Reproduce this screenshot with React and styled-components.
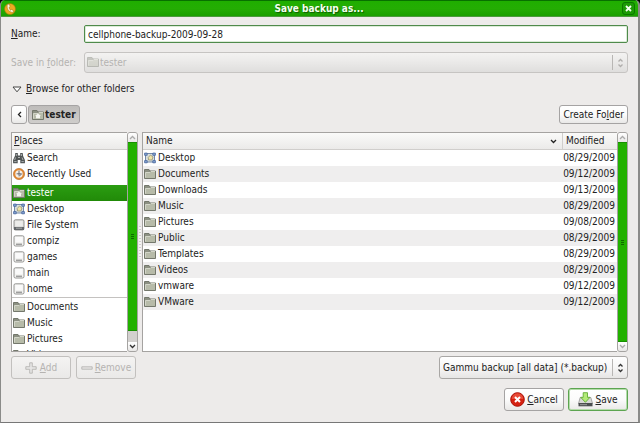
import React from "react";
import styled, { createGlobalStyle, css } from "styled-components";

const Global = createGlobalStyle`
  *, *::before, *::after { box-sizing: border-box; }
  body { margin: 0; background: #000; }
  body, button, input, select, table {
    font-family: "DejaVu Sans Condensed", "DejaVu Sans", sans-serif;
    font-size: 10px;
    line-height: 16px;
    color: #222;
  }
  u { text-underline-offset: 1px; }
`;

const Window = styled.div`
  display: flex;
  flex-direction: column;
  height: 100vh;
  min-height: 320px;
  background: #edebea;
  border: 1px solid #8b8b89;
  border-top: 0;
  border-right-width: 2px;
  border-bottom-color: #777;
  border-radius: 5px 5px 0 0;
  overflow: hidden;
`;

const TitleBar = styled.header`
  display: flex;
  align-items: center;
  flex: none;
  height: 17px;
  padding: 0 3px;
  background: linear-gradient(#1fae00, #24ad03 50%, #1a9f00);
  border-top: 1px solid #087000;
  border-bottom: 1px solid #4c9a3e;
`;

const Title = styled.h1`
  flex: 1;
  margin: 0;
  text-align: center;
  font-size: 10px;
  line-height: 15px;
  font-weight: bold;
  color: #f4fff0;
  text-shadow: 1px 1px 1px #0c5c00;
`;

const CloseButton = styled.button`
  display: grid;
  place-items: center;
  width: 13px;
  height: 13px;
  padding: 0;
  border: 1px solid #0b7600;
  border-radius: 3px;
  background: #1c9b05;
`;

const Body = styled.main`
  flex: 1;
  min-height: 0;
  display: flex;
  flex-direction: column;
  padding: 8px 10px 11px;
`;

const Fields = styled.div`
  display: grid;
  grid-template-columns: 65px 1fr;
  column-gap: 8px;
  row-gap: 9px;
  align-items: center;
`;

const Label = styled.label`
  white-space: nowrap;
  color: ${(p) => (p.$off ? "#b5b3b1" : "#222")};
`;

const NameInput = styled.input`
  width: 100%;
  height: 18px;
  padding: 0 3px;
  border: 1px solid #4f8a4b;
  border-radius: 2px;
  outline: none;
  background: #fff;
  box-shadow: inset 0 0 0 1px #dcecd8;
`;

const Combo = styled.div`
  position: relative;
  ${(p) => p.$end && css`margin-left: auto;`}
`;

const Select = styled.select`
  display: block;
  appearance: none;
  width: 100%;
  height: ${(p) => (p.$tall ? 23 : 21)}px;
  padding: 0 19px 0 ${(p) => (p.$icon ? 15 : 3)}px;
  border: 1px solid #a9a7a5;
  border-radius: 3px;
  background: linear-gradient(#fff, #f7f6f6 50%, #e6e5e4);
  opacity: 1;
  &:disabled {
    color: #b5b3b1;
    border-color: #c6c4c2;
    background: linear-gradient(#f3f2f1, #ecebea 40%, #dfdedd);
  }
`;

const ComboIcon = styled.span`
  position: absolute;
  left: 3px;
  top: 4px;
  height: 12px;
  opacity: 0.4;
  pointer-events: none;
`;

const ComboArrows = styled.span`
  position: absolute;
  right: 0;
  top: 3px;
  bottom: 3px;
  width: 16px;
  display: grid;
  place-items: center;
  border-left: 1px solid #b8b6b4;
  color: ${(p) => (p.$off ? "#b0aeac" : "#333")};
  pointer-events: none;
`;

const Expander = styled.button`
  display: flex;
  align-items: center;
  align-self: flex-start;
  gap: 4px;
  margin-top: 8px;
  padding: 0 1px;
  border: 0;
  background: none;
`;

const PathRow = styled.nav`
  display: flex;
  align-items: center;
  gap: 1px;
  margin: 8px 0;
`;

const Button = styled.button`
  display: inline-flex;
  align-items: center;
  justify-content: center;
  gap: ${(p) => p.$gap ?? 0}px;
  height: ${(p) => (p.$tall ? 23 : 19)}px;
  min-width: ${(p) => (p.$wide ? 60 : 16)}px;
  padding: 0 3px;
  white-space: nowrap;
  border: 1px solid #a5a3a3;
  border-radius: 3px;
  background: linear-gradient(#fff, #fbfbfb 50%, #e9e8e7);
  ${(p) => p.$pressed && css`
    font-weight: bold;
    background: linear-gradient(#bebcba, #cfcdcb);
  `}
  ${(p) => p.$primary && css`
    border-color: #5da551;
    box-shadow: inset 0 0 0 1px #b4dcaa;
  `}
  &:disabled {
    color: #b5b3b1;
    border-color: #c2c0be;
    background: linear-gradient(#f4f3f2, #eae9e8);
  }
`;

const Spacer = styled.span`
  flex: 1;
`;

const Browser = styled.div`
  flex: 1;
  min-height: 0;
  display: grid;
  grid-template-columns: 127px 4px 1fr;
  grid-template-rows: minmax(0, 1fr);
`;

const Pane = styled.section`
  display: flex;
  min-width: 0;
  min-height: 0;
`;

const PaneView = styled.div`
  flex: 1;
  min-width: 0;
  overflow-x: hidden;
  overflow-y: auto;
  scrollbar-width: none;
  background: #fff;
  border: 1px solid #a5a3a1;
  border-right: 0;
`;

const headerLook = css`
  height: 17px;
  padding: 0 2px;
  text-align: left;
  font-weight: normal;
  line-height: 16px;
  background: linear-gradient(#fafaf9, #ebeae9);
  border-bottom: 1px solid #d0cecc;
`;

const PlacesHeader = styled.h2`
  ${headerLook}
  margin: 0;
  font-size: 10px;
`;

const PlacesList = styled.ul`
  margin: 0;
  padding: 0;
  list-style: none;
`;

const Divider = styled.li`
  height: ${(p) => (p.$line ? 2 : 3)}px;
  border-top: ${(p) => (p.$line ? "1px solid #c4c2c0" : "0")};
`;

const Place = styled.button`
  display: flex;
  align-items: center;
  gap: 2px;
  width: 100%;
  height: 16px;
  padding: 0 1px;
  border: 0;
  white-space: nowrap;
  text-align: left;
  color: ${(p) => (p.$selected ? "#fff" : "#222")};
  background: ${(p) => (p.$selected ? "linear-gradient(#2b9d12, #218a08)" : "none")};
`;

const Scroll = styled.div`
  display: flex;
  flex-direction: column;
  flex: none;
  width: 11px;
  border: 1px solid #a5a3a1;
  border-radius: 3px;
  background: #d2d0ce;
  overflow: hidden;
`;

const ScrollButton = styled.button`
  flex: none;
  display: grid;
  place-items: center;
  height: 9px;
  padding: 0;
  border: 0;
  color: ${(p) => (p.$off ? "#aaa" : "#333")};
  background: linear-gradient(#fff, #e8e7e6);
`;

const Thumb = styled.div`
  flex: ${(p) => p.$share};
  display: grid;
  place-items: center;
  margin: 0 -1px;
  background: #22b100;
  border: 1px solid #179000;
  color: #0d6a00;
`;

const Trough = styled.div`
  flex: ${(p) => p.$share};
`;

const Grip = styled.div`
  align-self: center;
  justify-self: center;
  width: 2px;
  height: 32px;
  background: repeating-linear-gradient(#d0cecc 0 1px, #f6f5f4 1px 3px);
`;

const FileTable = styled.table`
  width: 100%;
  border-collapse: separate;
  border-spacing: 0;
`;

const Th = styled.th`
  ${headerLook}
  padding-left: 3px;
  ${(p) => p.$narrow && css`
    width: 55px;
    border-left: 1px solid #d0cecc;
  `}
`;

const HeadCell = styled.div`
  display: flex;
  align-items: center;
  justify-content: space-between;
  padding-right: 3px;
`;

const FileRow = styled.tr`
  &:nth-child(even) { background: #efeeee; }
`;

const Td = styled.td`
  height: 16px;
  padding: 0 2px 0 1px;
  white-space: nowrap;
  text-align: ${(p) => (p.$right ? "right" : "left")};
`;

const FileName = styled.span`
  display: flex;
  align-items: center;
  gap: 2px;
`;

const Actions = styled.div`
  display: flex;
  align-items: center;
  gap: 5px;
  margin-top: 4px;
`;

const DialogActions = styled.footer`
  display: flex;
  justify-content: flex-end;
  gap: 4px;
  margin-top: 9px;
`;

const Svg = styled.svg`
  display: block;
  flex: none;
`;

const Folder = ({ home }) => (
  <Svg width="12" height="12" viewBox="0 0 12 12">
    <path d="M.5 10.5V1.5h4.5l1 1.5h5.5v7.5z" fill="#8c9082" stroke="#74786c" />
    <path d="M1 10V4.5H6L7 3.5h4V10z" fill="#b7bba9" />
    <path d="M1.5 9.5V4.5H6L7 3.5h4" fill="none" stroke="#d2d5c8" />
    {home && <path d="M3 7 6 4.5 9 7 8 7v2.2H4V7z" fill="#f4f5f0" />}
  </Svg>
);

const Desktop = () => (
  <Svg width="12" height="12" viewBox="0 0 12 12">
    <rect x="1.5" y="1.5" width="9" height="8.5" fill="#d9dfdc" stroke="#7288a8" />
    <path d="M4.2 5.5 6.5 3 9 5 8 8H4.6z" fill="#f0e3a4" stroke="#8a8870" strokeWidth=".7" />
    <path d="M.6 1.1h2.6v2.2H.6zM8.8 1.1h2.6v2.2H8.8zM.6 8.6h2.6v2.2H.6zM8.8 8.6h2.6v2.2H8.8z" fill="#8caad8" stroke="#46659a" strokeWidth=".8" />
  </Svg>
);

const Drive = ({ system }) => (
  <Svg width="12" height="12" viewBox="0 0 12 12">
    <rect x="1" y=".8" width="10" height="10.2" rx="1.4" fill={system ? "#dededc" : "#f2f2f0"} stroke="#8a8a88" strokeWidth=".9" />
    <path d="M2.3 2h7.4v5H2.3z" fill={system ? "#ececea" : "#fafafa"} />
    {system && <path d="M1 8h10v3H1z" fill="#63676a" />}
    <path d="M3 9.2h6" stroke={system ? "#aaa" : "#777"} />
  </Svg>
);

const Binoculars = () => (
  <Svg width="12" height="12" viewBox="0 0 12 12">
    <path d="M2.3 1h2.5v2.6h2.4V1h2.5l.4 3 1.8 4v3.3H7.3V8H4.7v3.3H.1V8l1.8-4z" fill="#505454" />
    <path d="M3.3 2v2M8.4 2v2M2.5 5.5 1.7 8M9 5.5l1 2.5M1.2 9.6h2.4M8.4 9.6h2.4M5 5.5h2" stroke="#b8bcbc" strokeWidth=".9" />
  </Svg>
);

const Clock = () => (
  <Svg width="12" height="12" viewBox="0 0 12 12">
    <circle cx="6" cy="6" r="4.7" fill="#f5f0e9" stroke="#e38a35" strokeWidth="2" />
    <circle cx="6" cy="6" r="5.6" fill="none" stroke="#b0682c" strokeWidth=".5" />
    <path d="M6 2.6v5.2M3.6 5.8h5L6.2 8.4" fill="none" stroke="#5c5c66" strokeWidth=".9" />
  </Svg>
);

const CancelIcon = () => (
  <Svg width="15" height="15" viewBox="0 0 15 15">
    <circle cx="7.5" cy="7.5" r="6.8" fill="#d62111" stroke="#a90f05" />
    <path d="M1.7 7a5.8 5.8 0 0 1 11.6 0z" fill="#e84a37" />
    <path d="m5 5 5 5m0-5-5 5" stroke="#fff" strokeWidth="2" />
  </Svg>
);

const SaveIcon = () => (
  <Svg width="15" height="15" viewBox="0 0 15 15">
    <path d="M2.2 5.5h10.6l1.7 6H.5z" fill="#d8d8d6" stroke="#969694" strokeWidth=".8" />
    <path d="M.5 11h14v3.3H.5z" fill="#4b4e50" />
    <path d="M2 12.7h7" stroke="#9a9c9c" />
    <path d="M5.2.7h4.3v4.6H12l-4.6 5-4.7-5h2.5z" fill="#b3ea78" stroke="#62ad33" strokeWidth=".9" />
  </Svg>
);

const AppIcon = () => (
  <Svg width="12" height="12" viewBox="0 0 12 12">
    <circle cx="6" cy="6" r="5.5" fill="#edaa22" stroke="#9a7a0c" strokeWidth=".6" />
    <path d="M3.4 1.5C2.4 5 4.2 9.2 8.8 9.4l1-1.5L7.6 6.4l-1 .8C5.6 6.5 5.1 5.2 5.2 4.2l1-.8L5.2 1z" fill="#fff6dc" stroke="#96690c" strokeWidth=".5" />
  </Svg>
);

const PlusIcon = () => (
  <Svg width="12" height="12" viewBox="0 0 12 12">
    <path d="M4.7.8h2.6v3.9h3.9v2.6H7.3v3.9H4.7V7.3H.8V4.7h3.9z" fill="#e6e5e4" stroke="#b0aeac" strokeWidth=".8" />
  </Svg>
);

const MinusIcon = () => (
  <Svg width="12" height="12" viewBox="0 0 12 12">
    <path d="M.8 4.8h10.4v2.4H.8z" fill="#e6e5e4" stroke="#b0aeac" strokeWidth=".8" />
  </Svg>
);

const Chevron = ({ d, w = 7, h = 5 }) => (
  <Svg width={w} height={h} viewBox={`0 0 ${w} ${h}`}>
    <path d={d} fill="none" stroke="currentColor" strokeWidth="1.3" />
  </Svg>
);

const GripLines = () => (
  <Svg width="3" height="7" viewBox="0 0 3 7">
    <path d="M0 1.5h3M0 3.5h3M0 5.5h3" stroke="currentColor" />
  </Svg>
);

const UP = "M1 4 3.5 1.5 6 4";
const DOWN = "M1 1 3.5 3.5 6 1";

const Arrows = ({ off }) => (
  <ComboArrows $off={off}>
    <Chevron w={7} h={10} d="M1.5 3.5 3.5 1.5 5.5 3.5M1.5 6.5 3.5 8.5 5.5 6.5" />
  </ComboArrows>
);

const ScrollBar = ({ thumb, rest }) => (
  <Scroll>
    <ScrollButton $off aria-label="Scroll up"><Chevron d={UP} /></ScrollButton>
    <Thumb $share={thumb}><GripLines /></Thumb>
    {rest > 0 && <Trough $share={rest} />}
    <ScrollButton $off={!rest} aria-label="Scroll down"><Chevron d={DOWN} /></ScrollButton>
  </Scroll>
);

const places = [
  ["Search", <Binoculars />],
  ["Recently Used", <Clock />],
  null,
  ["tester", <Folder home />],
  ["Desktop", <Desktop />],
  ["File System", <Drive system />],
  ["compiz", <Drive />],
  ["games", <Drive />],
  ["main", <Drive />],
  ["home", <Drive />],
  "line",
  ["Documents", <Folder />],
  ["Music", <Folder />],
  ["Pictures", <Folder />],
  ["Videos", <Folder />],
];

const files = [
  ["Desktop", "08/29/2009"],
  ["Documents", "09/12/2009"],
  ["Downloads", "09/13/2009"],
  ["Music", "08/29/2009"],
  ["Pictures", "09/08/2009"],
  ["Public", "08/29/2009"],
  ["Templates", "08/29/2009"],
  ["Videos", "08/29/2009"],
  ["vmware", "09/12/2009"],
  ["VMware", "09/12/2009"],
];

export default function App() {
  return (
    <>
      <Global />
      <Window>
        <TitleBar>
          <AppIcon />
          <Title>Save backup as...</Title>
          <CloseButton aria-label="Close">
            <Svg width="7" height="7" viewBox="0 0 7 7">
              <path d="m1 1 5 5m0-5L1 6" stroke="#f2ffee" strokeWidth="1.8" />
            </Svg>
          </CloseButton>
        </TitleBar>
        <Body>
          <Fields>
            <Label htmlFor="name"><u>N</u>ame:</Label>
            <NameInput id="name" defaultValue="cellphone-backup-2009-09-28" />
            <Label htmlFor="folder" $off>Save in <u>f</u>older:</Label>
            <Combo>
              <Select id="folder" $icon disabled><option>tester</option></Select>
              <ComboIcon><Folder /></ComboIcon>
              <Arrows off />
            </Combo>
          </Fields>
          <Expander aria-expanded="true">
            <Svg width="10" height="7" viewBox="0 0 10 7">
              <path d="M1 1h8L5 5.8z" fill="#fff" stroke="#444" />
            </Svg>
            <span><u>B</u>rowse for other folders</span>
          </Expander>
          <PathRow>
            <Button aria-label="Parent folders"><Chevron w={5} h={7} d="M4 1 1.5 3.5 4 6" /></Button>
            <Button $pressed $gap={1}><Folder home />tester</Button>
            <Spacer />
            <Button><span>Create Fo<u>l</u>der</span></Button>
          </PathRow>
          <Browser>
            <Pane>
              <PaneView>
                <PlacesHeader><u>P</u>laces</PlacesHeader>
                <PlacesList>
                  {places.map((p, i) =>
                    Array.isArray(p) ? (
                      <li key={i}>
                        <Place $selected={p[0] === "tester"}>{p[1]}{p[0]}</Place>
                      </li>
                    ) : (
                      <Divider key={i} $line={p === "line"} />
                    )
                  )}
                </PlacesList>
              </PaneView>
              <ScrollBar thumb={190} rest={11} />
            </Pane>
            <Grip />
            <Pane>
              <PaneView>
                <FileTable>
                  <thead>
                    <tr>
                      <Th><HeadCell>Name<Chevron d={DOWN} /></HeadCell></Th>
                      <Th $narrow>Modified</Th>
                    </tr>
                  </thead>
                  <tbody>
                    {files.map(([name, date]) => (
                      <FileRow key={name}>
                        <Td><FileName>{name === "Desktop" ? <Desktop /> : <Folder />}{name}</FileName></Td>
                        <Td $right>{date}</Td>
                      </FileRow>
                    ))}
                  </tbody>
                </FileTable>
              </PaneView>
              <ScrollBar thumb={1} rest={0} />
            </Pane>
          </Browser>
          <Actions>
            <Button $tall $wide $gap={3} disabled><PlusIcon /><span><u>A</u>dd</span></Button>
            <Button $tall $wide $gap={2} disabled><MinusIcon /><span><u>R</u>emove</span></Button>
            <Combo $end>
              <Select $tall aria-label="File type"><option>Gammu backup [all data] (*.backup)</option></Select>
              <Arrows />
            </Combo>
          </Actions>
          <DialogActions>
            <Button $tall $wide $gap={2}><CancelIcon /><span><u>C</u>ancel</span></Button>
            <Button $tall $wide $primary $gap={2}><SaveIcon /><span><u>S</u>ave</span></Button>
          </DialogActions>
        </Body>
      </Window>
    </>
  );
}
